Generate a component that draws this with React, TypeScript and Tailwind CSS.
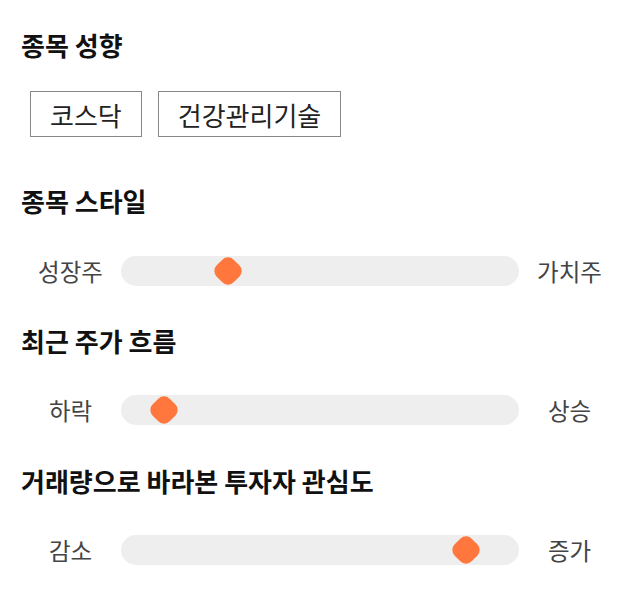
import React from "react";

const FONT = { fontFamily: '"Noto Sans CJK KR", "Noto Sans", sans-serif' };

function Heading({ children, className = "" }: { children: React.ReactNode; className?: string }) {
  return (
    <h2 className={`px-[21px] text-[26px] leading-[36px] font-bold text-[#111] ${className}`}>{children}</h2>
  );
}

function Slider({ left, right, value, className = "" }: { left: string; right: string; value: number; className?: string }) {
  return (
    <div className={`flex items-center px-[20px] ${className}`}>
      <div className="w-[101px] text-center text-[23.5px] leading-[30px] text-[#444]">{left}</div>
      <div className="relative h-[30px] flex-1 rounded-full bg-[#eeeeee]">
        {/* thumb */}
        <div
          className="absolute top-1/2 h-[24px] w-[24px] -translate-x-1/2 -translate-y-1/2 rotate-45 rounded-[8px] bg-[#ff773d]"
          style={{ left: `${value}%` }}
        />
      </div>
      <div className="w-[101px] text-center text-[23.5px] leading-[30px] text-[#444]">{right}</div>
    </div>
  );
}

export default function App() {
  return (
    <div className="w-[640px] h-[606px] bg-white pt-[27px]" style={FONT}>
      <Heading>종목 성향</Heading>
      <div className="mt-[28px] flex gap-[16px] px-[30px]">
        {["코스닥", "건강관리기술"].map(t => (
          <div key={t} className="flex h-[46px] items-center border border-[#888] px-[19px] text-[26px] text-[#222]">
            {t}
          </div>
        ))}
      </div>

      <Heading className="mt-[46px]">종목 스타일</Heading>
      <Slider className="mt-[37px]" left="성장주" right="가치주" value={27} />

      <Heading className="mt-[37px]">최근 주가 흐름</Heading>
      <Slider className="mt-[36px]" left="하락" right="상승" value={10.7} />

      <Heading className="mt-[38px]">거래량으로 바라본 투자자 관심도</Heading>
      <Slider className="mt-[36px]" left="감소" right="증가" value={86.7} />
    </div>
  );
}
